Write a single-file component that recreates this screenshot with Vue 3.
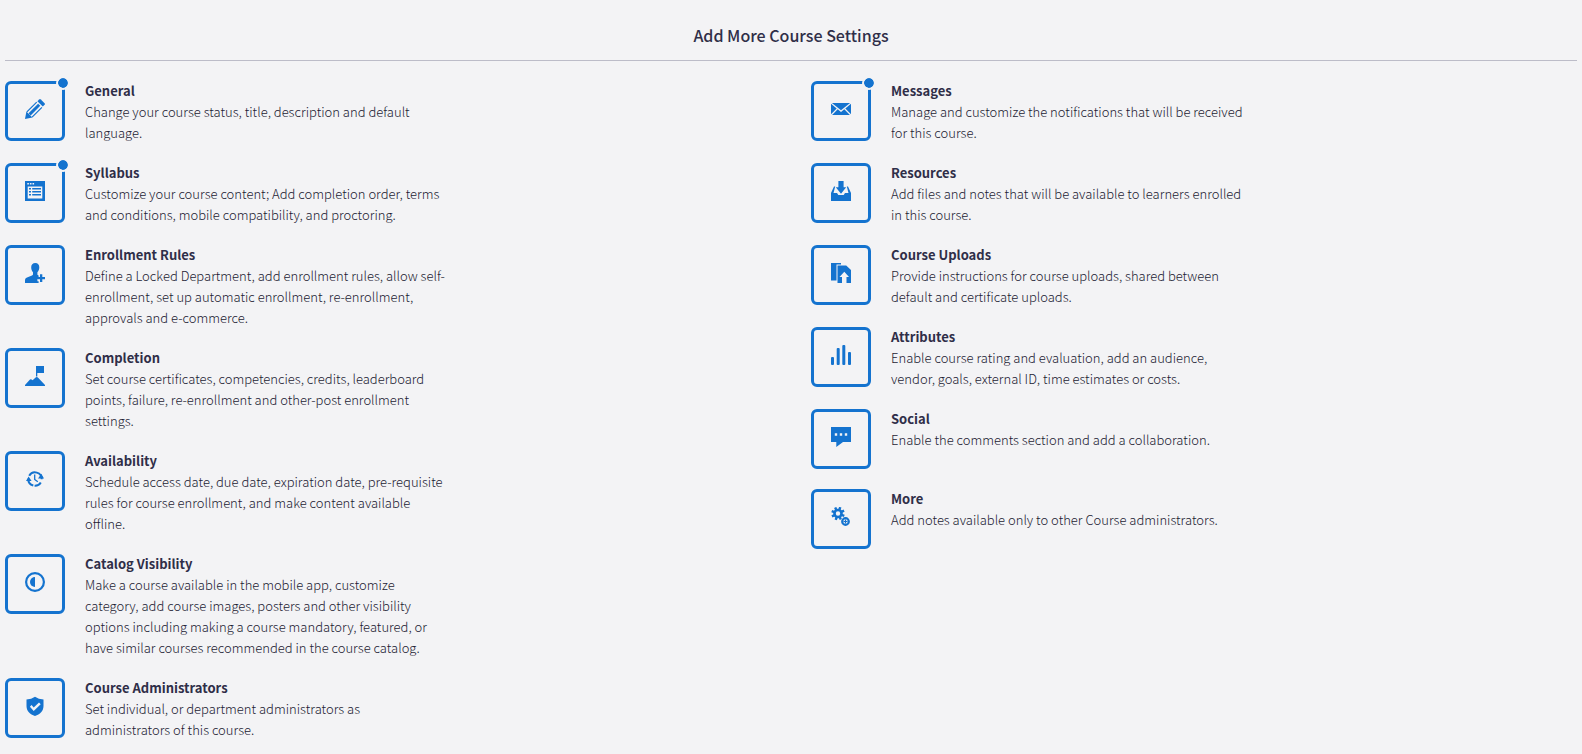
<!--
  CourseSettings.vue
  "Add More Course Settings" section:
    - centered section title with divider
    - two columns of settings (icon tile + title + description)
    - a dot on the tile marks settings that are already active
-->

<script setup>
import { ref } from "vue";

const columns = ref([
  [
    {
      id: "general",
      title: "General",
      text: "Change your course status, title, description and default language.",
      active: true,
    },
    {
      id: "syllabus",
      title: "Syllabus",
      text: "Customize your course content; Add completion order, terms and conditions, mobile compatibility, and proctoring.",
      active: true,
    },
    {
      id: "enrollment",
      title: "Enrollment Rules",
      text: "Define a Locked Department, add enrollment rules, allow self-enrollment, set up automatic enrollment, re-enrollment, approvals and e-commerce.",
      active: false,
    },
    {
      id: "completion",
      title: "Completion",
      text: "Set course certificates, competencies, credits, leaderboard points, failure, re-enrollment and other-post enrollment settings.",
      active: false,
    },
    {
      id: "availability",
      title: "Availability",
      text: "Schedule access date, due date, expiration date, pre-requisite rules for course enrollment, and make content available offline.",
      active: false,
    },
    {
      id: "catalog",
      title: "Catalog Visibility",
      text: "Make a course available in the mobile app, customize category, add course images, posters and other visibility options including making a course mandatory, featured, or have similar courses recommended in the course catalog.",
      active: false,
    },
    {
      id: "administrators",
      title: "Course Administrators",
      text: "Set individual, or department administrators as administrators of this course.",
      active: false,
    },
  ],
  [
    {
      id: "messages",
      title: "Messages",
      text: "Manage and customize the notifications that will be received for this course.",
      active: true,
    },
    {
      id: "resources",
      title: "Resources",
      text: "Add files and notes that will be available to learners enrolled in this course.",
      active: false,
    },
    {
      id: "uploads",
      title: "Course Uploads",
      text: "Provide instructions for course uploads, shared between default and certificate uploads.",
      active: false,
    },
    {
      id: "attributes",
      title: "Attributes",
      text: "Enable course rating and evaluation, add an audience, vendor, goals, external ID, time estimates or costs.",
      active: false,
    },
    {
      id: "social",
      title: "Social",
      text: "Enable the comments section and add a collaboration.",
      active: false,
    },
    {
      id: "more",
      title: "More",
      text: "Add notes available only to other Course administrators.",
      active: false,
    },
  ],
]);

const toggle = (item) => {
  item.active = !item.active;
};

// teeth of the big gear, in degrees
const GEAR_TEETH = [0, 45, 90, 135, 180, 225, 270, 315];
</script>

<template>
  <section class="course-settings">
    <h2 class="section-title">Add More Course Settings</h2>

    <div class="settings-columns">
      <div v-for="(items, index) in columns" :key="index" class="settings-column">
        <div v-for="item in items" :key="item.id" class="setting">
          <button
            type="button"
            class="setting-tile"
            :aria-labelledby="`${item.id}-title`"
            :aria-pressed="item.active"
            @click="toggle(item)"
          >
            <svg class="icon" viewBox="0 0 20 20" aria-hidden="true">
              <template v-if="item.id === 'general'">
                <path d="M12.4 2.2 14.2.4q.8-.7 1.6 0l3.8 3.8q.7.8 0 1.6l-1.8 1.8z" />
                <path d="M1.4 12.6 7.4 18.6 0 20z" />
                <path class="line" stroke-width="1.2" d="M11.7 3.1 1.9 12.9M16.9 8.3 7.1 18.1" />
                <path class="line" stroke-width="3" d="M14.2 5.8 4.6 15.4" />
              </template>
              <template v-else-if="item.id === 'syllabus'">
                <path
                  fill-rule="evenodd"
                  d="M0 0H20V20H0zM2.7 5.5V17.5H17.3V5.5zM2.3 2V3.6H3.9V2zM4.9 2V3.6H6.5V2zM7.5 2V3.6H9.1V2z"
                />
                <path d="M4 7h2v1.4H4zM7.2 7H16v1.4H7.2zM4 10h2v1.4H4zM7.2 10H16v1.4H7.2zM4 13h2v1.4H4zM7.2 13H16v1.4H7.2z" />
              </template>
              <template v-else-if="item.id === 'enrollment'">
                <path d="M10.3 0c2.6 0 4 1.8 4 4.3 0 2-.7 3.8-1.9 5v2.4l1.2.7v3.7h-1.2v2.2h1.2V20H0v-2.6c0-1.5.7-2.4 2-2.9l5-2c.7-.3 1-.7 1-1.2V9.3C6.8 8.1 6.2 6.3 6.2 4.3 6.2 1.8 7.7 0 10.3 0z" />
                <path d="M15 11.3h2.3V14H20v2.3h-2.7V19H15v-2.7h-2.5V14H15z" />
              </template>
              <template v-else-if="item.id === 'completion'">
                <path d="M11 0h8v7h-6.7v3.5H11z" />
                <path d="M0 20v-1l5-5.500q.8-.7 1.600 0l1 .8 3.300-3q1-.8 2 .1L20 19v1z" />
              </template>
              <template v-else-if="item.id === 'availability'">
                <path class="line" stroke-width="2" d="M3.300 9.800A6.700 6.700 0 0 0 8.300 16.500M9.600 16.700A6.700 6.700 0 0 0 15.800 13.400" />
                <path class="line" stroke-width="2" d="M16.700 10.200A6.700 6.700 0 0 0 4.200 6.700" />
                <path d="M1 12 3.600 7.400 6.600 12zM13 9.400 16.300 4.700 19 9.400z" />
                <path class="line" stroke-width="1.300" d="M9.700 5.600V10.400L12.800 12.800" />
              </template>
              <template v-else-if="item.id === 'catalog'">
                <circle class="line" cx="10" cy="10" r="8.9" stroke-width="2.2" />
                <path d="M10 5v10A5 5 0 0 1 10 5z" />
              </template>
              <path
                v-else-if="item.id === 'administrators'"
                fill-rule="evenodd"
                d="M10 .8q3.500 2.600 8.500 2.700v6.500c0 5-3.500 8.500-8.500 10-5-1.500-8.500-5-8.500-10V3.500Q6.500 3.400 10 .8zM4.900 10.700 8.700 14.900 15.700 8.300 14 6.500 8.700 11.500 6.600 9z"
              />
              <path
                v-else-if="item.id === 'messages'"
                d="M.9 4H19.100L10 11.300zM0 4.800 5.700 9.500 0 15.200zM20 4.800V15.200L14.300 9.500zM6.700 10.300 10 13l3.300-2.700L18.900 16H1.100z"
              />
              <template v-else-if="item.id === 'resources'">
                <path d="M7.400 0h5.200v6.200h2.600L10 12.700 4.800 6.200h2.600z" />
                <path d="M3 5.500h1.200L2.500 12H6l1.300 2h5.400l1.300-2h3.500L15.800 5.500H17L20 12v8H0v-8z" />
              </template>
              <template v-else-if="item.id === 'uploads'">
                <path d="M0 0h10v1.500H5.500V17.500H0z" />
                <path d="M6.500 2.500h8.700L20 7v13h-4.500v-6H18l-4.700-5.300L8.500 14H11v6H6.500z" />
              </template>
              <template v-else-if="item.id === 'attributes'">
                <rect x="0" y="12" width="3" height="8" rx="1" />
                <rect x="5.7" y="3" width="3" height="17" rx="1" />
                <rect x="11.3" y="0" width="3" height="20" rx="1" />
                <rect x="17" y="7" width="3" height="13" rx="1" />
              </template>
              <path
                v-else-if="item.id === 'social'"
                fill-rule="evenodd"
                d="M0 0H20V15H12L5.300 20V15H0zM3.800 6.300v2.400h2.400V6.300zM8.800 6.300v2.400h2.400V6.300zM13.800 6.300v2.400h2.400V6.300z"
              />
              <template v-else>
                <circle class="line" cx="7" cy="6.5" r="3.5" stroke-width="2.6" />
                <rect
                  v-for="angle in GEAR_TEETH"
                  :key="angle"
                  x="5.8"
                  y="-.2"
                  width="2.4"
                  height="3"
                  :transform="`rotate(${angle + 20} 7 6.5)`"
                />
                <circle class="line" cx="14.5" cy="14.5" r="3.3" stroke-width="2.2" />
                <path d="M13.900 12.500h1.200v1.400h1.400v1.200h-1.400v1.400h-1.200v-1.400h-1.400v-1.200h1.400z" />
              </template>
            </svg>
            <span v-if="item.active" class="active-dot"></span>
          </button>

          <div class="setting-body">
            <h3 :id="`${item.id}-title`" class="setting-title">{{ item.title }}</h3>
            <p class="setting-text">{{ item.text }}</p>
          </div>
        </div>
      </div>
    </div>
  </section>
</template>

<style>
body {
  background: #f3f3f5;
}
</style>

<style scoped>
.course-settings {
  padding: 20px 5px 16px;
  font-family: "Noto Sans CJK SC", "Open Sans", sans-serif;
  color: #2f2e48;
}

.section-title {
  margin: 0 0 20px;
  padding-bottom: 10px;
  border-bottom: 1px solid #bcbcc8;
  font-size: 16px;
  line-height: 30px;
  font-weight: 500;
  text-align: center;
}

.settings-columns {
  display: grid;
  grid-template-columns: repeat(2, 1fr);
  gap: 40px;
}

.settings-column {
  display: flex;
  flex-direction: column;
  gap: 20px;
}

.setting {
  display: flex;
  align-items: flex-start;
  gap: 20px;
}

.setting-tile {
  position: relative;
  display: flex;
  flex-shrink: 0;
  align-items: center;
  justify-content: center;
  box-sizing: border-box;
  width: 60px;
  height: 60px;
  padding: 0 0 4px;
  color: #1473cf;
  background: transparent;
  border: 3px solid currentColor;
  border-radius: 6px;
  cursor: pointer;
}

.setting-tile:hover {
  background: #e6eef8;
}

.icon {
  width: 20px;
  height: 20px;
  fill: currentColor;
}

.icon .line {
  fill: none;
  stroke: currentColor;
}

.active-dot {
  position: absolute;
  top: -8px;
  right: -8px;
  width: 10px;
  height: 10px;
  background: #1473cf;
  background-clip: padding-box;
  border: 2px solid #f3f3f5;
  border-radius: 50%;
}

.setting-body {
  max-width: 362px;
}

.setting-title {
  margin: 0;
  font-size: 13px;
  line-height: 20px;
  font-weight: 700;
}

.setting-text {
  margin: 0;
  color: #1c1b33;
  font-size: 13px;
  line-height: 21px;
  font-weight: 300;
}
</style>
